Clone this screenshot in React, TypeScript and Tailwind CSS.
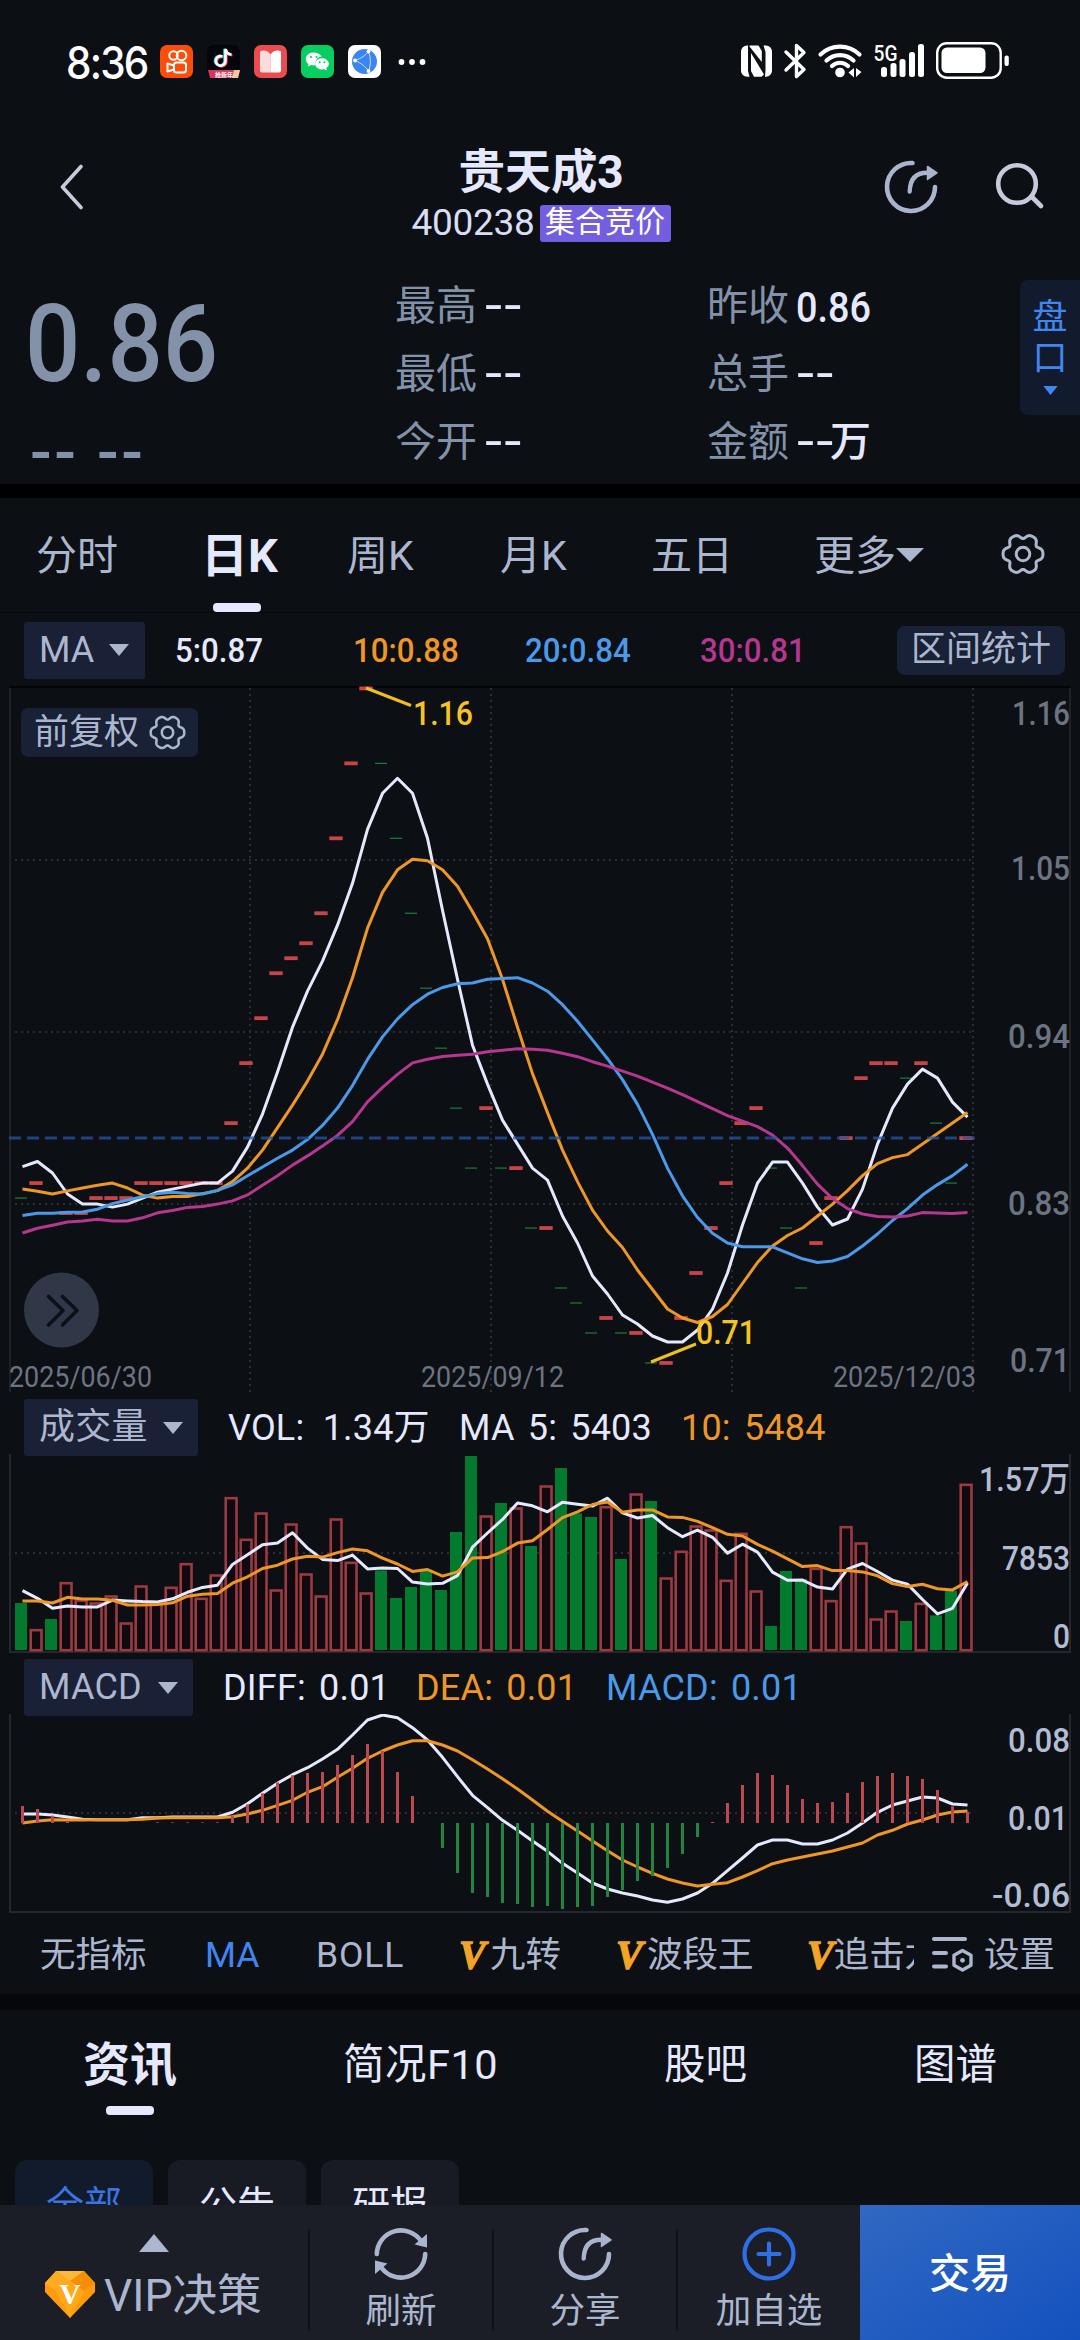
import { clsx } from "clsx";
import type { ReactNode } from "react";

const WHITE = "#e6e9fd";
const ORANGE = "#ee9727";
const BLUE = "#4b9aea";
const PINK = "#b53790";
const UP = "#c74549";
const DOWN = "#1b7f3a";

const STEP = 15;
const midX = (i: number) => 22.5 + i * STEP;

const closes = [
  0.82, 0.83, 0.81, 0.81, 0.81, 0.82, 0.82, 0.82, 0.83, 0.83, 0.83, 0.83, 0.83, 0.83, 0.87, 0.91,
  0.94, 0.97, 0.98, 0.99, 1.01, 1.06, 1.11, 1.16, 1.11, 1.06, 1.01, 0.96, 0.92, 0.88, 0.84, 0.88,
  0.84, 0.84, 0.8, 0.8, 0.76, 0.75, 0.73, 0.74, 0.73, 0.73, 0.71, 0.71, 0.74, 0.77, 0.8, 0.83,
  0.87, 0.88, 0.84, 0.8, 0.76, 0.79, 0.82, 0.86, 0.9, 0.91, 0.91, 0.9, 0.91, 0.87, 0.83, 0.86,
];

const down = new Set([
  0, 2, 24, 25, 26, 27, 28, 29, 30, 32, 34, 36, 37, 38, 40, 42, 50, 51, 52, 59, 61, 62,
]);

// averages for the first days, whose window starts before the visible range
const lead5 = [0.841, 0.8444, 0.8367, 0.8227];
const lead10 = [0.826, 0.8245, 0.8227, 0.8248, 0.8267, 0.8285, 0.83, 0.8267, 0.822];
const lead20 = [
  0.8083, 0.8098, 0.8098, 0.8105, 0.8108, 0.8126, 0.8163, 0.8187, 0.8209, 0.823, 0.8239, 0.823,
  0.8227, 0.8251, 0.8288, 0.8349, 0.8407, 0.8465, 0.852,
];
const lead30 = [
  0.7967, 0.7998, 0.8019, 0.804, 0.8047, 0.8059, 0.8047, 0.8047, 0.8068, 0.8102, 0.8117, 0.8138,
  0.8144, 0.816, 0.8181, 0.8221, 0.8285, 0.8349, 0.842, 0.8481, 0.8548, 0.8618, 0.871, 0.8842,
  0.8939, 0.9025, 0.9102, 0.9126, 0.9144,
];

// one unit = 27 lots
const volumes = [
  141, 61, 93, 202, 150, 141, 162, 81, 192, 145, 188, 259, 155, 225, 457, 332, 411, 180, 378, 228,
  162, 393, 263, 171, 239, 156, 189, 237, 180, 354, 582, 402, 441, 426, 312, 492, 546, 410, 399, 430,
  273, 468, 447, 216, 296, 372, 360, 209, 350, 177, 72, 237, 213, 245, 148, 370, 321, 93, 117, 87,
  140, 104, 177, 497,
];
const volLead5 = [178, 155, 125, 132];
const volLead10 = [147, 147, 141, 158, 153, 153, 149, 135, 135];

// MACD panel values in thirds of a pixel, positive above the zero line
const hist = [
  51, 42, 22, 4, 0, 0, 0, 0, 0, 2, 2, 2, 2, 2, 22, 56, 89, 122, 143, 150, 153, 174, 204, 237, 216,
  153, 81, 0, -75, -150, -210, -222, -240, -243, -252, -249, -258, -252, -249, -222, -201, -174, -159,
  -135, -93, -42, 3, 60, 114, 150, 144, 114, 72, 60, 63, 90, 123, 141, 150, 141, 132, 99, 50, 33,
];
const diff = [
  27, 27, 24, 18, 11, 10, 10, 10, 16, 16, 18, 18, 18, 18, 32, 58, 89, 119, 145, 166, 192, 221, 264,
  309, 324, 316, 286, 249, 197, 139, 83, 46, 8, -22, -54, -85, -121, -150, -180, -198, -210, -219,
  -231, -238, -228, -210, -181, -143, -105, -66, -51, -51, -63, -63, -51, -30, 0, 32, 54, 66, 78, 75,
  57, 54,
];
const dea = [
  0, 6, 10, 9, 9, 10, 10, 10, 11, 15, 16, 16, 16, 16, 19, 27, 38, 53, 68, 92, 109, 137, 164, 194, 216,
  234, 247, 247, 234, 216, 190, 162, 133, 102, 69, 35, 5, -24, -54, -83, -111, -132, -151, -168, -180,
  -189, -184, -179, -162, -143, -122, -111, -102, -93, -84, -72, -60, -36, -22, -3, 9, 24, 33, 36,
];

function average(data: number[], n: number, lead: number[]) {
  return data.map((_, i) =>
    i < n - 1 ? lead[i] : data.slice(i - n + 1, i + 1).reduce((a, b) => a + b, 0) / n,
  );
}

const priceY = (p: number) => 688.4 + (1.16 - p) * 1499;
const volY = (v: number) => 1650 - v / 3;
const macdY = (v: number) => 1823 - v / 3;

function Line({ data, y, color }: { data: number[]; y: (v: number) => number; color: string }) {
  return (
    <polyline
      points={data.map((v, i) => `${midX(i)},${y(v).toFixed(1)}`).join(" ")}
      fill="none"
      stroke={color}
      strokeWidth="3"
      strokeLinejoin="round"
    />
  );
}

type LabelProps = {
  x: number;
  y: number;
  w: number;
  size?: number;
  fill: string;
  weight?: number;
  end?: boolean;
  children: string;
};

function Label({ x, y, w, size = 34, fill, weight = 500, end, children }: LabelProps) {
  return (
    <text
      x={end ? x - w : x}
      y={y}
      fontSize={size}
      fontWeight={weight}
      fill={fill}
      textLength={w}
      lengthAdjust="spacingAndGlyphs"
    >
      {children}
    </text>
  );
}

// six rounded lobes with narrower dips between them
function gearPath(c: number, r: number, lobe: number) {
  const pts: string[] = [];
  for (let a = 0; a < 360; a += 4) {
    const t = (a * Math.PI) / 180;
    const d = r + lobe * (Math.cos(6 * t) - 0.25 * Math.cos(12 * t));
    pts.push(`${(c + d * Math.cos(t)).toFixed(2)} ${(c + d * Math.sin(t)).toFixed(2)}`);
  }
  return `M${pts.join("L")}Z`;
}

function Gear({ className }: { className: string }) {
  return (
    <svg viewBox="0 0 44 44" className={className} fill="none" stroke="#acb7cf" strokeWidth="3">
      <path d={gearPath(22, 18.2, 2.3)} strokeLinejoin="round" />
      <circle cx="22" cy="22" r="6.8" />
    </svg>
  );
}

function ShareIcon() {
  return (
    <svg viewBox="0 0 54 54" className="h-[54px] w-[54px]" fill="none" stroke="#a9b5cd">
      <path d="M28.5 3A24 24 0 1 0 51 27" strokeWidth="4.6" strokeLinecap="round" />
      <path d="M25.7 31.5C26 20 31 12.8 43 12.8" strokeWidth="4.4" strokeLinecap="round" />
      <path d="M43.5 6.5 53 12.8 43.5 19.5Z" fill="#a9b5cd" strokeWidth="1.5" strokeLinejoin="round" />
    </svg>
  );
}

function RefreshIcon() {
  return (
    <svg viewBox="0 0 54 54" className="h-[54px] w-[54px]" fill="none" stroke="#a9b5cd">
      <path d="M2.8 27A24.2 24.2 0 0 1 47 14" strokeWidth="4.6" strokeLinecap="round" />
      <path d="M51.2 27A24.2 24.2 0 0 1 7 40" strokeWidth="4.6" strokeLinecap="round" />
      <path d="M53 7V20.5L40.5 17.5ZM1 47V33.5L13.5 36.5Z" fill="#a9b5cd" stroke="none" />
    </svg>
  );
}

function Caret({ className }: { className?: string }) {
  return (
    <svg viewBox="0 0 20 12" className={clsx("h-3 w-5", className)} fill="#acb7cf">
      <path d="M0 0H20L10 12Z" />
    </svg>
  );
}

function StatusBar() {
  return (
    <div className="flex h-[124px] items-start pt-[42px]">
      <div className="ml-[66px] w-[94px] shrink-0 font-[Inter] text-[45px] leading-[41px] font-medium tracking-[-2px] text-white">
        <span className="inline-block origin-left scale-x-[.9]">8:36</span>
      </div>
      <div className="mt-[3px] flex w-[238px] shrink-0 gap-[14px]">
        <svg viewBox="0 0 33 33" className="size-[33px]" fill="none" stroke="#fff" strokeWidth="2">
          <rect width="33" height="33" rx="7" fill="#fc4d0a" stroke="none" />
          <circle cx="13.5" cy="10.5" r="4.2" />
          <circle cx="21.5" cy="10.5" r="4.8" />
          <rect x="14" y="17.5" width="12" height="10" rx="2.5" />
          <path d="M14 20.5 7.5 18.5V26.5L14 24.5" strokeLinejoin="round" />
        </svg>
        <svg viewBox="0 0 33 33" className="size-[33px]" fill="none" strokeWidth="2.6">
          <rect width="33" height="33" rx="7" fill="#05060c" />
          <path d="M15.5 11.5A4.8 4.8 0 1 0 18.5 16V4C19 7.5 21 9.3 24.5 9.5" stroke="#ff2d55" transform="translate(.9 .7)" />
          <path d="M15.5 11.5A4.8 4.8 0 1 0 18.5 16V4C19 7.5 21 9.3 24.5 9.5" stroke="#27e6e2" transform="translate(-.9 -.3)" />
          <path d="M15.5 11.5A4.8 4.8 0 1 0 18.5 16V4C19 7.5 21 9.3 24.5 9.5" stroke="#fff" />
          <path d="M1 25H33L31 33H3Z" fill="#d8355c" />
          <path d="M27 25H33L31 33H25Z" fill="#f3c9a0" />
          <text x="8" y="31.500" fontSize="6" fontWeight="700" fill="#fff">
            抢新年
          </text>
        </svg>
        <svg viewBox="0 0 33 33" className="size-[33px]">
          <rect width="33" height="33" rx="7" fill="#ec4c51" />
          <path d="M6 6.5C10 4.500 14 6 16.5 9.5V27.5H8A2 2 0 0 1 6 25.5Z" fill="#fbdcdc" />
          <path d="M27 6.5C23 4.500 19 6 16.5 9.5V27.5H25A2 2 0 0 0 27 25.5Z" fill="#fff" />
        </svg>
        <svg viewBox="0 0 33 33" className="size-[33px]" fill="#fff">
          <rect width="33" height="33" rx="7" fill="#08ce62" />
          <path d="M12.5 7.5c-4.400 0-7.700 2.900-7.700 6.500 0 2 1 3.700 2.700 4.900L7 21.500l3-1.500c3 .8 4 .2 4.500 0-1-5 3-8.400 6-8.200-1-2.600-4-4.300-8-4.300Z" />
          <path d="M21 13.200c-3.900 0-6.800 2.500-6.800 5.600s2.900 5.600 6.800 5.600l2.200-.3 2.500 1.400-.5-2.300c1.600-1 2.600-2.600 2.600-4.400 0-3.100-2.900-5.600-6.800-5.600Z" />
          <g fill="#08ce62">
            <circle cx="10" cy="12" r="1.1" />
            <circle cx="15.5" cy="12" r="1.1" />
            <circle cx="18.7" cy="17.3" r="1" />
            <circle cx="23.4" cy="17.3" r="1" />
          </g>
        </svg>
        <svg viewBox="0 0 33 33" className="size-[33px]" fill="none">
          <rect width="33" height="33" rx="7" fill="#fff" />
          <circle cx="16.5" cy="16.5" r="12.5" fill="#3b86ee" />
          <path d="M7 15.5C13 13.500 18 10 20.5 6.5 23 13 23 20 20.5 26 18 22 13 18 7 15.5Z" stroke="#bfe0ff" strokeWidth="1" />
          <circle cx="7" cy="15.5" r="1.900" fill="#fff" />
          <circle cx="20.5" cy="6.5" r="1.900" fill="#fff" />
          <circle cx="20.5" cy="26" r="1.900" fill="#fff" />
        </svg>
      </div>
      <svg viewBox="0 0 28 6" className="mt-[17px] h-[6px] w-[28px] shrink-0" fill="#fff">
        <circle cx="3.500" cy="3" r="2.900" />
        <circle cx="14" cy="3" r="2.900" />
        <circle cx="24.500" cy="3" r="2.900" />
      </svg>

      <svg viewBox="740 42 270 38" className="ml-[314px] h-[38px] w-[270px] shrink-0" fill="#fff">
        <path d="M747 45.500H748V71L749.500 76.800H747A6 6 0 0 1 741 71V51.500A6 6 0 0 1 747 45.500ZM749.500 45.500H758.500L761.800 51V62L749.500 46.500ZM751 53 764 74.500 761.500 76.800H754L751 71ZM763.500 45.500H766A6 6 0 0 1 772 51.500V71A6 6 0 0 1 766 76.800H765L765.500 70V52Z" />
        <path d="M786 52 804 69.500 796.500 76.500V45.500L804 52.500 786 70" fill="none" stroke="#fff" strokeWidth="3.400" strokeLinecap="round" strokeLinejoin="round" />
        <g fill="none" stroke="#fff" strokeWidth="4.200" strokeLinecap="round">
          <path d="M820.500 54.500A28 28 0 0 1 859.500 54.500" />
          <path d="M826.500 60.500A19.500 19.500 0 0 1 853.500 60.500" />
          <path d="M832 66A11.500 11.500 0 0 1 848 66" />
        </g>
        <circle cx="840" cy="72.500" r="4.800" />
        <path d="M854 68V77.500L848.500 72.500ZM856 68 861.500 72 856 77Z" />
        <text x="873.500" y="60.500" fontFamily="Roboto" fontSize="22" fontWeight="500" textLength="24" lengthAdjust="spacingAndGlyphs">
          5G
        </text>
        <rect x="881" y="67" width="6" height="10" rx="2.500" />
        <rect x="890.500" y="63" width="6" height="14" rx="2.500" />
        <rect x="899.500" y="59" width="6" height="18" rx="2.500" />
        <rect x="909" y="52" width="6" height="25" rx="2.500" />
        <rect x="918" y="44" width="6" height="33" rx="2.500" />
        <rect x="937.200" y="43.200" width="63.500" height="34.500" rx="9.500" fill="none" stroke="#fff" strokeWidth="2.400" />
        <rect x="941.500" y="47.500" width="44" height="25.500" rx="5.500" />
        <rect x="1004.500" y="55.500" width="4.300" height="10.500" rx="2" />
      </svg>
    </div>
  );
}

function Header() {
  return (
    <div className="flex h-[136px]">
      <svg viewBox="0 0 24 46" className="mt-[40px] ml-[60px] h-[46px] w-[24px] shrink-0" fill="none" stroke="#c8c9da" strokeWidth="3.600" strokeLinecap="round">
        <path d="M21 2.500 2.500 23 21 43.500" strokeLinejoin="round" />
      </svg>
      <div className="ml-[251px] flex w-[412px] flex-col items-center">
        <div className="mt-[20px] text-[46.5px] leading-[56px] font-bold tracking-[-0.300px] text-[#e6e9fd]">贵天成3</div>
        <div className="mt-[3px] flex items-center">
          <span className="w-[128px] text-[37px] leading-[40px] tracking-[-0.300px] text-[#d9def5]">400238</span>
          <span className="h-[37px] w-[131px] rounded-[3px] bg-[#735ee0] text-center text-[30px] leading-[34px] text-white">
            集合竞价
          </span>
        </div>
      </div>
      <div className="mt-[36px] ml-[137px]">
        <ShareIcon />
      </div>
      <svg viewBox="0 0 50 48" className="mt-[38px] ml-[57px] h-[48px] w-[50px]" fill="none" stroke="#c8c9da" strokeWidth="4.600" strokeLinecap="round">
        <circle cx="22" cy="22" r="18.800" />
        <path d="M37.500 35.500 46 44" />
      </svg>
    </div>
  );
}

function Stat({ label, value, unit }: { label: string; value?: string; unit?: string }) {
  return (
    <div className="flex h-[68px] items-center text-[41px] font-medium text-[#e6e9fd]">
      <span className="w-[89px] font-normal text-[#8392a9]">{label}</span>
      {value ? (
        <span className="origin-left scale-x-90 text-[42px]">{value}</span>
      ) : (
        <span className="w-[34px] origin-left scale-x-[1.38]">--</span>
      )}
      {unit}
    </div>
  );
}

function Quote() {
  return (
    <div className="flex h-[224px]">
      <div className="w-[395px] shrink-0 pl-[25px] text-[#8392a9]">
        <div className="mt-[26px] origin-left scale-x-[.91] text-[107px] leading-[118px] font-medium">0.86</div>
        <div className="mt-[20px] ml-[5px] text-[64px] leading-[60px] font-medium tracking-[2.500px]">-- --</div>
      </div>
      <div className="w-[312px] shrink-0 pt-[13px]">
        <Stat label="最高" />
        <Stat label="最低" />
        <Stat label="今开" />
      </div>
      <div className="w-[313px] shrink-0 pt-[13px]">
        <Stat label="昨收" value="0.86" />
        <Stat label="总手" />
        <Stat label="金额" unit="万" />
      </div>
      <div className="mt-[20px] flex h-[135px] flex-1 flex-col items-center rounded-l-[8px] bg-[#121b2d] pt-[17px] text-[35px] leading-[41px] text-[#4186f0]">
        <span>盘</span>
        <span>口</span>
        <svg viewBox="0 0 16 10" className="mt-[7px] h-[9px] w-[15px]" fill="#4186f0">
          <path d="M0 0H16L8 10Z" />
        </svg>
      </div>
    </div>
  );
}

const periods = [
  { name: "分时", w: "w-[168px]" },
  { name: "日K", w: "w-[143px]" },
  { name: "周K", w: "w-[153px]" },
  { name: "月K", w: "w-[151px]" },
  { name: "五日", w: "w-[163px]" },
];

function PeriodTabs() {
  return (
    <div className="flex h-[115px] items-start border-b border-[#07090d] pl-[36px] text-[41px] text-[#acb7cf]">
      {periods.map((p) => (
        <div key={p.name} className={clsx("relative h-[114px] shrink-0 leading-[116px]", p.w)}>
          {p.name === "日K" ? (
            <>
              <span className="-ml-[3px] text-[47px] font-bold text-[#e6e9fd]">{p.name}</span>
              <i className="absolute bottom-0 left-[9px] h-[9px] w-[48px] rounded-[4px] bg-[#e6e9fd]" />
            </>
          ) : (
            p.name
          )}
        </div>
      ))}
      <div className="flex w-[187px] items-center leading-[116px]">
        更多
        <svg viewBox="0 0 28 14" className="-mt-[2px] h-[14px] w-[28px]" fill="#acb7cf">
          <path d="M0 0H28L14 14Z" />
        </svg>
      </div>
      <Gear className="mt-[34px] size-[44px]" />
    </div>
  );
}

function MaRow() {
  return (
    <div className="flex h-[74px] items-center pl-[24px] text-[34px] font-medium">
      <div className="flex h-[57px] w-[121px] shrink-0 items-center rounded-[3px] bg-[#1a2035] pl-[15px]">
        <span className="w-[70px] text-[36px] font-normal text-[#acb7cf]">MA</span>
        <Caret />
      </div>
      <span className="ml-[30px] w-[178px] text-[#e6e9fd]">
        <span className="inline-block origin-left scale-x-[.92]">5:0.87</span>
      </span>
      <span className="w-[172px] text-[#ee9727]">
        <span className="inline-block origin-left scale-x-[.92]">10:0.88</span>
      </span>
      <span className="w-[175px] text-[#4b9aea]">
        <span className="inline-block origin-left scale-x-[.92]">20:0.84</span>
      </span>
      <span className="w-[197px] text-[#b53790]">
        <span className="inline-block origin-left scale-x-[.92]">30:0.81</span>
      </span>
      <span className="h-[49px] w-[168px] shrink-0 rounded-[8px] bg-[#182135] text-center text-[35px] leading-[48px] font-normal text-[#acb7cf]">
        区间统计
      </span>
    </div>
  );
}

function PriceChart() {
  const grid = { stroke: "#2a2d34", strokeWidth: 2, strokeDasharray: "2 4" };
  const axis: [string, number, number][] = [
    ["1.16", 725, 58],
    ["1.05", 880, 59],
    ["0.94", 1048, 62],
    ["0.83", 1215, 62],
    ["0.71", 1372, 60],
  ];
  return (
    <div className="relative h-[709px]">
      <svg viewBox="0 686 1080 709" className="block h-[709px] w-[1080px]" fontFamily="Roboto, 'Noto Sans CJK SC', sans-serif">
        <path d="M9 687H1071" stroke="#030406" strokeWidth="2" />
        <path d="M10 688V1392M1070 688V1392" stroke="#1d2128" strokeWidth="2" />
        {[860, 1032, 1204].map((y) => (
          <path key={y} d={`M15 ${y}H973`} {...grid} />
        ))}
        {[250, 491, 732, 973].map((x) => (
          <path key={x} d={`M${x} 688V1392`} {...grid} />
        ))}
        {closes.map((c, i) =>
          down.has(i) ? (
            <path key={i} d={`M${15 + i * STEP} ${priceY(c)}h12`} stroke={DOWN} strokeWidth="1.200" />
          ) : (
            <path key={i} d={`M${14.3 + i * STEP} ${priceY(c)}h13.4`} stroke={UP} strokeWidth="3.800" />
          ),
        )}
        <Line data={average(closes, 5, lead5)} y={priceY} color={WHITE} />
        <Line data={average(closes, 10, lead10)} y={priceY} color={ORANGE} />
        <Line data={average(closes, 20, lead20)} y={priceY} color={BLUE} />
        <Line data={average(closes, 30, lead30)} y={priceY} color={PINK} />
        <path d="M9 1138H975" stroke="#2454a8" strokeOpacity=".75" strokeWidth="3" strokeDasharray="12 6" />
        <path d="M366 688 411 705.500M651 1362 696 1344" stroke="#f0c020" strokeWidth="3" />
        <Label x={413} y={725} w={60} fill="#f5c421">1.16</Label>
        <Label x={696} y={1344} w={60} fill="#f5c421">0.71</Label>
        {axis.map(([t, y, w]) => (
          <Label key={t} x={1070} y={y} w={w} fill="#6c7482" end>
            {t}
          </Label>
        ))}
        <Label x={9} y={1387} w={143} size={29} weight={400} fill="#6c7482">2025/06/30</Label>
        <Label x={421} y={1387} w={143} size={29} weight={400} fill="#6c7482">2025/09/12</Label>
        <Label x={833} y={1387} w={143} size={29} weight={400} fill="#6c7482">2025/12/03</Label>
        <circle cx="61.500" cy="1310" r="37.500" fill="#303848" />
        <path d="M48.500 1296.500 63 1310.500 48.500 1325M62.500 1296.500 77 1310.500 62.500 1325" fill="none" stroke="#0d1016" strokeWidth="3.600" strokeLinecap="round" strokeLinejoin="round" />
      </svg>
      <div className="absolute top-[22px] left-[21px] flex h-[49px] w-[177px] items-center rounded-[7px] bg-[#182135] pl-[13px] text-[35px] text-[#acb7cf]">
        <span className="w-[115px] leading-[48px]">前复权</span>
        <Gear className="size-[37px]" />
      </div>
    </div>
  );
}

function IndicatorHead({ name, box, children }: { name: string; box: string; children: ReactNode }) {
  return (
    <div className="flex items-center pl-[24px] text-[36px] tracking-[0.200px] text-[#e6e9fd] [word-spacing:4px]">
      <div className={clsx("flex h-[57px] shrink-0 items-center justify-between rounded-[3px] bg-[#1a2035] pr-[15px] pl-[15px] text-[#acb7cf]", box)}>
        <span className="leading-[55px]">{name}</span>
        <Caret />
      </div>
      {children}
    </div>
  );
}

function VolumeChart() {
  return (
    <>
      <div className="h-[59px] pt-[4px]">
        <IndicatorHead name="成交量" box="w-[174px]">
          <span className="ml-[30px] w-[231px] [word-spacing:0]">VOL:&nbsp; 1.34万</span>
          <span className="w-[222px]">MA 5: 5403</span>
          <span className="text-[#ee9727]">10: 5484</span>
        </IndicatorHead>
      </div>
      <svg viewBox="0 1454 1080 201" className="block h-[201px] w-[1080px]" fontFamily="Roboto, 'Noto Sans CJK SC', sans-serif">
        <path d="M10 1454V1652H1070V1454" fill="none" stroke="#23272e" strokeWidth="2" />
        <path d="M15 1553H973" stroke="#2a2d34" strokeWidth="2" strokeDasharray="2 4" />
        {volumes.map((v, i) =>
          down.has(i) ? (
            <rect key={i} x={15 + i * STEP} y={volY(v)} width="12" height={v / 3} fill="#047a2e" />
          ) : (
            <rect key={i} x={15.7 + i * STEP} y={volY(v) + 0.5} width="10.800" height={v / 3 - 0.3} fill="#100a10" stroke="#9b3a40" strokeWidth="2.600" />
          ),
        )}
        <Line data={average(volumes, 5, volLead5)} y={volY} color={WHITE} />
        <Line data={average(volumes, 10, volLead10)} y={volY} color={ORANGE} />
        <Label x={1070} y={1491} w={91} fill="#b2bdd4" weight={500} end>1.57万</Label>
        <Label x={1070} y={1570} w={68} fill="#b2bdd4" end>7853</Label>
        <Label x={1070} y={1648} w={17} fill="#b2bdd4" end>0</Label>
      </svg>
    </>
  );
}

function MacdChart() {
  return (
    <>
      <div className="h-[59px] pt-[4px]">
        <IndicatorHead name="MACD" box="w-[169px]">
          <span className="ml-[30px] w-[193px]">DIFF: 0.01</span>
          <span className="w-[190px] text-[#ee9727]">DEA: 0.01</span>
          <span className="text-[#4b9aea]">MACD: 0.01</span>
        </IndicatorHead>
      </div>
      <svg viewBox="0 1714 1080 200" className="block h-[200px] w-[1080px]" fontFamily="Roboto, 'Noto Sans CJK SC', sans-serif">
        <path d="M10 1714V1912H1070V1714" fill="none" stroke="#23272e" strokeWidth="2" />
        <path d="M15 1813H973" stroke="#2a2d34" strokeWidth="2" strokeDasharray="2 4" />
        <Line data={diff} y={macdY} color={WHITE} />
        <Line data={dea} y={macdY} color={ORANGE} />
        {hist.map((v, i) => (
          <path key={i} d={`M${midX(i)} 1823V${macdY(v)}`} stroke={v > 0 ? "#bd484d" : "#1f8540"} strokeWidth="3" />
        ))}
        <Label x={1070} y={1752} w={62} fill="#b2bdd4" end>0.08</Label>
        <Label x={1068} y={1830} w={60} fill="#b2bdd4" end>0.01</Label>
        <Label x={1070} y={1907} w={78} fill="#b2bdd4" end>-0.06</Label>
      </svg>
    </>
  );
}

function Vip({ children }: { children: string }) {
  return (
    <>
      <b className="inline-block w-[31px] font-['Liberation_Serif'] text-[40px] leading-none font-bold text-[#f2a426] italic [-webkit-text-stroke:1.400px_#f2a426]">
        V
      </b>
      {children}
    </>
  );
}

function IndicatorRow() {
  return (
    <div className="flex h-[80px] items-center pt-[2px] pl-[40px] text-[35.500px] leading-[60px] text-[#acb7cf]">
      <span className="w-[165px] shrink-0">无指标</span>
      <span className="w-[111px] shrink-0 text-[#4186f0]">MA</span>
      <span className="w-[143px] shrink-0 tracking-[0.900px]">BOLL</span>
      <span className="flex w-[157px] shrink-0 items-center">
        <Vip>九转</Vip>
      </span>
      <span className="flex w-[191px] shrink-0 items-center">
        <Vip>波段王</Vip>
      </span>
      <span className="flex w-[107px] shrink-0 items-center overflow-hidden whitespace-nowrap">
        <Vip>追击龙</Vip>
      </span>
      <svg viewBox="0 0 44 40" className="-mt-[2px] ml-[17px] h-[40px] w-[44px] shrink-0" fill="none" stroke="#acb7cf" strokeWidth="4" strokeLinecap="round">
        <path d="M3 5H34M3 19H15M3 32.500H15" />
        <path d="M31.500 16.500 40 21.300V31.200L31.500 36 23 31.200V21.300Z" strokeWidth="3.400" strokeLinejoin="round" />
        <circle cx="31.500" cy="26.300" r="2.400" fill="#acb7cf" stroke="none" />
      </svg>
      <span className="ml-[9px]">设置</span>
    </div>
  );
}

function News() {
  return (
    <div className="box-content h-[195px] overflow-hidden border-t-[16px] border-[#06070b]">
      <div className="flex h-[150px] pl-[83px] text-[41.500px] leading-[109px] text-[#e6e9fd]">
        <div className="relative w-[260px] text-[47px] font-bold">
          资讯
          <i className="absolute top-[96px] left-[23px] h-[9px] w-[48px] rounded-[4px] bg-[#e6e9fd]" />
        </div>
        <span className="w-[321px] tracking-[0.500px]">简况F10</span>
        <span className="w-[250px]">股吧</span>
        <span>图谱</span>
      </div>
      <div className="flex gap-[15px] pl-[15px] text-center text-[38px] leading-[90px] text-[#e6e9fd]">
        <span className="h-[90px] w-[138px] rounded-[12px] bg-[#111b2b] text-[#3b74e2]">全部</span>
        <span className="h-[90px] w-[138px] rounded-[12px] bg-[#181b23]">公告</span>
        <span className="h-[90px] w-[138px] rounded-[12px] bg-[#181b23]">研报</span>
      </div>
    </div>
  );
}

function Action({ label, className, children }: { label: string; className: string; children: ReactNode }) {
  return (
    <div className={clsx("mt-[24px] flex h-[102px] shrink-0 flex-col items-center border-l-2 border-[#0f1116]", className)}>
      <div className="-mt-[2px]">{children}</div>
      <span className="mt-[7px] text-[35.500px] leading-[46px] text-[#acb7cf]">{label}</span>
    </div>
  );
}

function BottomBar() {
  return (
    <div className="flex h-[135px] bg-[#1b1e27]">
      <div className="w-[308px] shrink-0">
        <svg viewBox="0 0 30 18" className="mt-[29px] ml-[139px] h-[18px] w-[30px]" fill="#acb7cf">
          <path d="M0 18H30L15 0Z" />
        </svg>
        <div className="mt-[16px] flex items-center pl-[44px]">
          <svg viewBox="0 0 52 50" className="-mt-[4px] h-[50px] w-[52px]">
            <path d="M12 2H40L51 14V23L26 49 1 23V14Z" fill="#ff9b0c" />
            <path d="M12 2H40L26 12Z" fill="#ffb93a" />
            <path d="M1 14 12 2 26 12 12 22Z" fill="#ffab22" />
            <path d="M51 14 40 2 26 12 40 22Z" fill="#f78f06" />
            <path d="M26 12 12 22 26 49 40 22Z" fill="#ffa818" />
            <text x="26" y="35" textAnchor="middle" fontFamily="Liberation Serif" fontWeight="700" fontSize="29" fill="#fff">
              V
            </text>
          </svg>
          <span className="ml-[8px] text-[44.500px] leading-[56px] whitespace-nowrap text-[#acb7cf]">VIP决策</span>
        </div>
      </div>
      <Action label="刷新" className="w-[184px]">
        <RefreshIcon />
      </Action>
      <Action label="分享" className="w-[184px]">
        <ShareIcon />
      </Action>
      <Action label="加自选" className="w-[184px]">
        <svg viewBox="0 0 54 54" className="size-[54px]" fill="none" stroke="#2f6fe6" strokeWidth="4.200" strokeLinecap="round">
          <circle cx="27" cy="27" r="24.500" />
          <path d="M27 16.500V37.500M16.500 27H37.500" />
        </svg>
      </Action>
      <div className="flex-1 bg-linear-to-br from-[#3068c2] to-[#1351be] text-center text-[41px] leading-[138px] font-medium text-white">
        交易
      </div>
    </div>
  );
}

export default function App() {
  return (
    <div className="flex h-[2340px] w-[1080px] flex-col overflow-hidden bg-[#0c0f14] font-[Roboto,'Noto_Sans_CJK_SC',sans-serif]">
      <StatusBar />
      <Header />
      <Quote />
      <div className="h-[14px] shrink-0 bg-black" />
      <PeriodTabs />
      <MaRow />
      <div className="-mt-px">
        <PriceChart />
      </div>
      <VolumeChart />
      <MacdChart />
      <IndicatorRow />
      <News />
      <BottomBar />
    </div>
  );
}
